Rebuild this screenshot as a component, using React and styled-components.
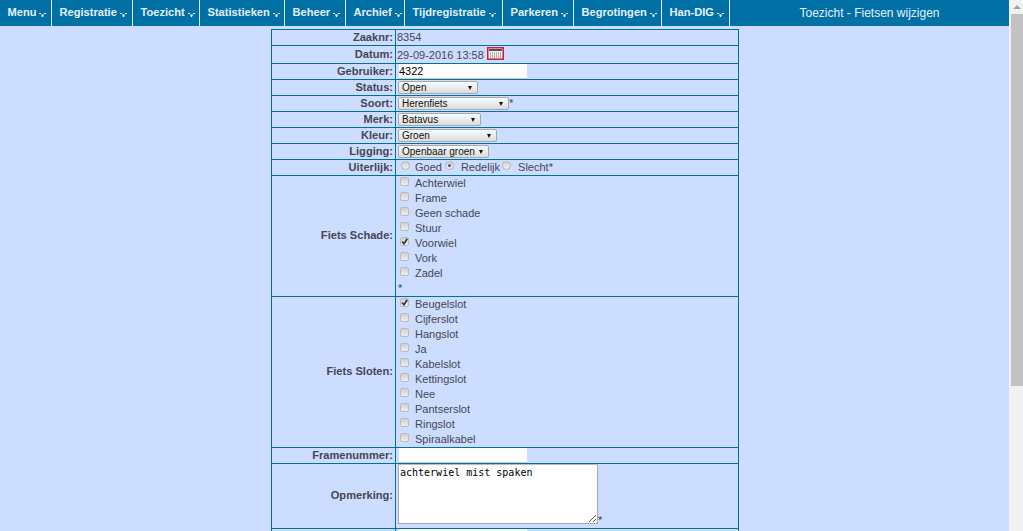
import styled, { createGlobalStyle } from "styled-components"

const GlobalStyle = createGlobalStyle`
html, body {
  margin: 0;
  padding: 0;
  height: 531px;
  overflow: hidden;
  background: #ccddff;
  font-family: "Liberation Sans", Arial, sans-serif;
  font-size: 11px;
  color: #464655;
}
`

const Page = styled.div`
display: flex;
height: 531px;
overflow: hidden;
`

const Main = styled.div`
width: 1009px;
flex-shrink: 0;
`

const TopBar = styled.div`
display: flex;
height: 26px;
background: #0070a5;
color: #e4f2ff;
`

const MenuList = styled.ul`
display: flex;
margin: 0;
padding: 0;
list-style: none;
`

const MenuItem = styled.li`
display: flex;
align-items: center;
box-sizing: border-box;
width: ${props => props.$width}px;
height: 26px;
padding: 0 0 2px 7.5px;
border-right: 1px solid #e4f2ff;
font-weight: bold;
font-size: 11.1px;
white-space: nowrap;
`

const Arrow = styled.svg`
width: 7px;
height: 6px;
margin: 5px 0 0 3px;
flex-shrink: 0;
`

const PageTitle = styled.div`
flex: 1;
text-align: center;
font-size: 12px;
line-height: 26px;
`

const Form = styled.table`
border-collapse: collapse;
margin: 3px 0 0 271px;
width: 468px;
table-layout: fixed;
`

const Row = styled.tr`
height: ${props => props.$height}px;
`

const Label = styled.th`
box-sizing: border-box;
width: 124px;
padding: 0 2px 2px 0;
border: 1px solid #00709f;
text-align: right;
font-size: 11.1px;
font-weight: bold;
color: #464655;
`

const Cell = styled.td`
padding: 0 0 ${props => (props.$lift ? 2 : 0)}px 1px;
border: 1px solid #00709f;
font-size: 11px;
white-space: nowrap;
vertical-align: ${props => (props.$top ? "top" : "middle")};
`

const TextInput = styled.input`
display: inline-block;
box-sizing: border-box;
width: 128px;
height: 15px;
margin: 0 0 0 2px;
padding: 0;
border: 0;
border-bottom: 1px solid #c8c8c8;
background: #fff;
font-family: "Liberation Sans", Arial, sans-serif;
font-size: 11px;
color: #000;
vertical-align: middle;
`

const Select = styled.div`
display: inline-flex;
align-items: center;
justify-content: space-between;
box-sizing: border-box;
width: ${props => props.$width}px;
height: 13px;
margin-left: 1px;
padding: 0 5px 0 3px;
border: 1px solid #a8a8a8;
border-radius: 2px;
background: linear-gradient(#fbfbfb, #dcdcdc);
color: #111;
font-size: 10px;
line-height: 11px;
vertical-align: middle;
`

const Caret = styled.span`
width: 0;
height: 0;
border-left: 2px solid transparent;
border-right: 2px solid transparent;
border-top: 4px solid #111;
`

const DateText = styled.span`
vertical-align: middle;
`

const CalendarIcon = styled.svg`
width: 17px;
height: 13px;
margin: 0 0 3px 3px;
vertical-align: middle;
`

const RadioRow = styled.div`
display: flex;
align-items: center;
`

const Radio = styled.span`
display: flex;
align-items: center;
justify-content: center;
box-sizing: border-box;
width: 9px;
height: 9px;
margin: 0 ${props => props.$gap}px 2px ${props => props.$left}px;
border: 1px solid #b4b4b4;
border-radius: 50%;
background: linear-gradient(#d4d4d4, #f0f0f0);

&::after {
  content: "";
  display: ${props => (props.$checked ? "block" : "none")};
  width: 3px;
  height: 3px;
  border-radius: 50%;
  background: #555;
}
`

const CheckList = styled.div`
display: flex;
flex-direction: column;
margin-top: -1px;
`

const CheckItem = styled.div`
display: flex;
align-items: center;
height: 15px;
`

const CheckBox = styled.span`
display: flex;
align-items: center;
justify-content: center;
box-sizing: border-box;
width: 9px;
height: 9px;
margin: 0 6px 2px 3px;
border: 1px solid #bbb;
border-radius: 2px;
background: linear-gradient(#d0d0d0, #eee);
`

const CheckMark = styled.svg`
width: 7px;
height: 7px;
`

const Required = styled.div`
height: 15px;
padding-left: 1px;
line-height: 16px;
`

const Memo = styled.div`
position: relative;
display: inline-block;
box-sizing: border-box;
width: 200px;
height: 60px;
margin-left: 1px;
padding: 1px 1px;
border: 1px solid #a9a9a9;
border-top-color: #bbb;
background: #fff;
color: #000;
font-family: "DejaVu Sans Mono", "Liberation Mono", monospace;
font-size: 10px;
line-height: 13px;
vertical-align: top;
`

const Grip = styled.svg`
position: absolute;
right: 0;
bottom: 0;
width: 9px;
height: 9px;
`

const Star = styled.span`
display: inline-block;
margin-top: 50px;
vertical-align: top;
line-height: 12px;
`

const Scrollbar = styled.div`
display: flex;
flex-direction: column;
flex: 1;
background: #f1f1f1;
padding-left: 2px;
`

const ScrollButton = styled.div`
display: flex;
align-items: center;
justify-content: center;
height: 14px;
`

const ScrollUp = styled.span`
width: 0;
height: 0;
border-left: 4px solid transparent;
border-right: 4px solid transparent;
border-bottom: 4px solid #a3a3a3;
`

const ScrollThumb = styled.div`
height: 372px;
background: #c1c1c1;
`

const menu = [
  ["Menu", 52],
  ["Registratie", 81],
  ["Toezicht", 67],
  ["Statistieken", 85],
  ["Beheer", 61],
  ["Archief", 59],
  ["Tijdregistratie", 98],
  ["Parkeren", 71],
  ["Begrotingen", 88],
  ["Han-DIG", 68],
]

const schade = ["Achterwiel", "Frame", "Geen schade", "Stuur", "Voorwiel", "Vork", "Zadel"]
const sloten = ["Beugelslot", "Cijferslot", "Hangslot", "Ja", "Kabelslot", "Kettingslot", "Nee", "Pantserslot", "Ringslot", "Spiraalkabel"]

const selects = [
  ["Status:", "Open", 80],
  ["Soort:", "Herenfiets", 111, true],
  ["Merk:", "Batavus", 83],
  ["Kleur:", "Groen", 99],
  ["Ligging:", "Openbaar groen", 91],
]

const Checks = ({ items, checked }) => (
  <CheckList>
    {items.map(item => (
      <CheckItem key={item}>
        <CheckBox>
          {item === checked && (
            <CheckMark viewBox="0 0 7 7">
              <path d="M1 3.5 L3 5.8 L6.2 0.8" fill="none" stroke="#333" strokeWidth="1.6" />
            </CheckMark>
          )}
        </CheckBox>
        {item}
      </CheckItem>
    ))}
  </CheckList>
)

const App = () => {
  return (
    <Page>
      <GlobalStyle />
      <Main>
        <TopBar>
          <MenuList>
            {menu.map(([name, width]) => (
              <MenuItem key={name} $width={width}>
                {name}
                <Arrow viewBox="0 0 7 6">
                  <path d="M0 1 H2 V2 H0 Z M5 1 H7 V2 H5 Z M2 2.5 H5 V3.5 H4.2 V5 H2.8 V3.5 H2 Z" fill="#f2f8ff" />
                </Arrow>
              </MenuItem>
            ))}
          </MenuList>
          <PageTitle>Toezicht - Fietsen wijzigen</PageTitle>
        </TopBar>

        <Form>
          <tbody>
            <Row $height={16}>
              <Label>Zaaknr:</Label>
              <Cell $lift>8354</Cell>
            </Row>
            <Row $height={18}>
              <Label>Datum:</Label>
              <Cell>
                <DateText>29-09-2016 13:58</DateText>
                <CalendarIcon viewBox="0 0 17 13">
                  <rect x="0.75" y="0.75" width="15.5" height="11.5" fill="#f6eef0" stroke="#c41f3a" strokeWidth="1.5" />
                  <rect x="2" y="2" width="13" height="2" fill="#5c4a50" />
                  <path d="M3 6 H14 M3 8 H14 M3 10 H14" stroke="#7a6a72" strokeDasharray="1 1" />
                </CalendarIcon>
              </Cell>
            </Row>
            <Row $height={16}>
              <Label>Gebruiker:</Label>
              <Cell>
                <TextInput defaultValue="4322" />
              </Cell>
            </Row>
            {selects.map(([label, value, width, star]) => (
              <Row $height={16} key={label}>
                <Label>{label}</Label>
                <Cell>
                  <Select $width={width}>
                    {value}
                    <Caret />
                  </Select>
                  {star && "*"}
                </Cell>
              </Row>
            ))}
            <Row $height={16}>
              <Label>Uiterlijk:</Label>
              <Cell $lift>
                <RadioRow>
                  <Radio $left={4} $gap={5} />
                  Goed
                  <Radio $left={3} $gap={7} $checked />
                  Redelijk
                  <Radio $left={2} $gap={7} />
                  Slecht*
                </RadioRow>
              </Cell>
            </Row>
            <Row $height={121}>
              <Label>Fiets Schade:</Label>
              <Cell $top>
                <Checks items={schade} checked="Voorwiel" />
                <Required>*</Required>
              </Cell>
            </Row>
            <Row $height={151}>
              <Label>Fiets Sloten:</Label>
              <Cell $top>
                <Checks items={sloten} checked="Beugelslot" />
              </Cell>
            </Row>
            <Row $height={16}>
              <Label>Framenummer:</Label>
              <Cell>
                <TextInput />
              </Cell>
            </Row>
            <Row $height={65}>
              <Label>Opmerking:</Label>
              <Cell $top>
                <Memo>
                  achterwiel mist spaken
                  <Grip viewBox="0 0 9 9">
                    <path d="M1 8 L8 1 M5 8 L8 5" stroke="#555" fill="none" />
                  </Grip>
                </Memo>
                <Star>*</Star>
              </Cell>
            </Row>
            <Row $height={16}>
              <Label />
              <Cell>
                <TextInput />
              </Cell>
            </Row>
          </tbody>
        </Form>
      </Main>
      <Scrollbar>
        <ScrollButton>
          <ScrollUp />
        </ScrollButton>
        <ScrollThumb />
      </Scrollbar>
    </Page>
  )
}

export default App
